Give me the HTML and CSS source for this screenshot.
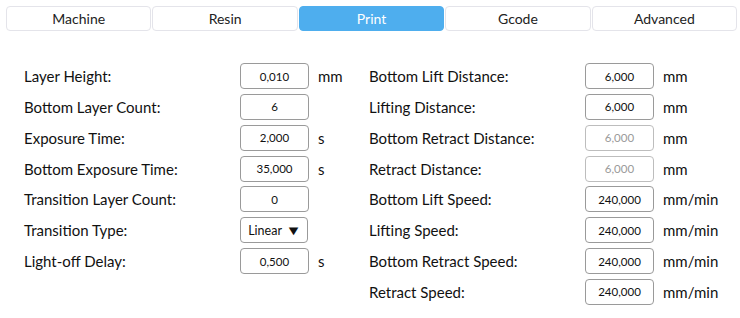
FILE: index.html
```html
<!DOCTYPE html>
<html lang="en">
<head>
    <meta charset="UTF-8">
    <title>Print Settings</title>
    <link rel="stylesheet" href="styles.css">
</head>
<body>
    <nav class="tabs">
        <a class="tab">Machine</a>
        <a class="tab">Resin</a>
        <a class="tab active">Print</a>
        <a class="tab">Gcode</a>
        <a class="tab">Advanced</a>
    </nav>

    <div class="settings">
        <div class="column">
            <label>Layer Height:</label><div class="field">0,010</div><span class="unit">mm</span>
            <label>Bottom Layer Count:</label><div class="field">6</div><span class="unit"></span>
            <label>Exposure Time:</label><div class="field">2,000</div><span class="unit">s</span>
            <label>Bottom Exposure Time:</label><div class="field">35,000</div><span class="unit">s</span>
            <label>Transition Layer Count:</label><div class="field">0</div><span class="unit"></span>
            <label>Transition Type:</label><div class="field select">Linear <span class="arrow">&#9660;</span></div><span class="unit"></span>
            <label>Light-off Delay:</label><div class="field">0,500</div><span class="unit">s</span>
        </div>
        <div class="column">
            <label>Bottom Lift Distance:</label><div class="field">6,000</div><span class="unit">mm</span>
            <label>Lifting Distance:</label><div class="field">6,000</div><span class="unit">mm</span>
            <label>Bottom Retract Distance:</label><div class="field disabled">6,000</div><span class="unit">mm</span>
            <label>Retract Distance:</label><div class="field disabled">6,000</div><span class="unit">mm</span>
            <label>Bottom Lift Speed:</label><div class="field">240,000</div><span class="unit">mm/min</span>
            <label>Lifting Speed:</label><div class="field">240,000</div><span class="unit">mm/min</span>
            <label>Bottom Retract Speed:</label><div class="field">240,000</div><span class="unit">mm/min</span>
            <label>Retract Speed:</label><div class="field">240,000</div><span class="unit">mm/min</span>
        </div>
    </div>
</body>
</html>
```

FILE: styles.css
```css
body {
    margin: 0;
    background-color: #ffffff;
    color: #111111;
    font-family: 'Lato', 'Open Sans', sans-serif;
}
.tabs {
    display: flex;
    gap: 1px;
    padding: 6px 3px 0 6px;
}
.tab {
    flex: 1;
    height: 23px;
    line-height: 23px;
    text-align: center;
    font-size: 14px;
    color: #222222;
    border: 1px solid #e4e4ea;
    border-radius: 4px;
    background-color: #ffffff;
}
.tab.active {
    background-color: #4eaeee;
    border-color: #4eaeee;
    color: #ffffff;
}
.settings {
    display: flex;
    padding: 32px 0 0 24px;
}
.column {
    width: 345px;
    display: grid;
    grid-template-columns: 216px 69px 1fr;
    grid-auto-rows: 26px;
    row-gap: 4.85px;
    align-items: center;
}
.column label {
    font-size: 15px;
}
.unit {
    font-size: 15px;
    padding-left: 9px;
}
.field {
    box-sizing: border-box;
    height: 26px;
    border: 1px solid #9a9a9a;
    border-radius: 4px;
    font-size: 11.5px;
    display: flex;
    align-items: center;
    justify-content: center;
    color: #111111;
}
.field.disabled {
    color: #9a9a9a;
    border-color: #bdbdbd;
}
.field.select {
    width: 68px;
    font-size: 12.5px;
    gap: 5px;
}
.arrow {
    font-size: 13px;
    transform: scaleX(1.25);
}
```
